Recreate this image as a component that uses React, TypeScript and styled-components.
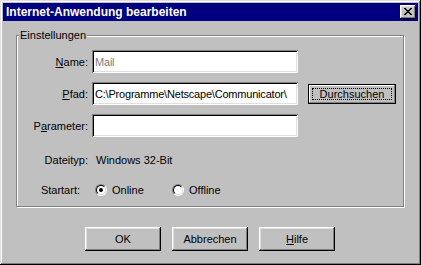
import styled, { createGlobalStyle } from "styled-components";

const GlobalStyle = createGlobalStyle`
  html, body {
    margin: 0;
    padding: 0;
    background: #c0c0c0;
  }
  * {
    box-sizing: border-box;
  }
`;

const bevelOut = `
  box-shadow: inset -1px -1px #000000, inset 1px 1px #ffffff,
    inset -2px -2px #808080, inset 2px 2px #dfdfdf;
`;

const DialogWindow = styled.div`
  width: 421px;
  height: 265px;
  background: #c0c0c0;
  padding: 3px;
  display: flex;
  flex-direction: column;
  font-family: "Liberation Sans", Arial, sans-serif;
  font-size: 11px;
  color: #000000;
  box-shadow: inset -1px -1px #000000, inset 1px 1px #dfdfdf,
    inset -2px -2px #808080, inset 2px 2px #ffffff;
`;

const TitleBar = styled.div`
  height: 18px;
  background: #000080;
  display: flex;
  align-items: center;
  justify-content: space-between;
  padding: 0 2px 0 3px;
`;

const Title = styled.span`
  color: #ffffff;
  font-weight: bold;
  font-size: 12px;
`;

const CloseButton = styled.div`
  width: 16px;
  height: 14px;
  background: #c0c0c0;
  display: flex;
  align-items: center;
  justify-content: center;
  padding-bottom: 1px;
  ${bevelOut}
`;

const Body = styled.div`
  flex: 1;
  display: flex;
  flex-direction: column;
  padding: 14px 12px 0 13px;
`;

const GroupBox = styled.div`
  position: relative;
  width: 388px;
  height: 172px;
  border: 1px solid #808080;
  box-shadow: inset 1px 1px #ffffff, 1px 1px #ffffff;
  padding: 14px 0 0 0;
  display: flex;
  flex-direction: column;
`;

const GroupLabel = styled.span`
  position: absolute;
  top: -8px;
  left: 2px;
  padding: 0 1px;
  background: #c0c0c0;
  line-height: 14px;
`;

const FormRow = styled.div<{ $height: number; $gap: number }>`
  display: grid;
  grid-template-columns: 71px 206px auto;
  column-gap: 4px;
  align-items: center;
  height: ${(p) => p.$height}px;
  margin-bottom: ${(p) => p.$gap}px;
`;

const Label = styled.span<{ $padRight?: number }>`
  text-align: right;
  padding-right: ${(p) => p.$padRight ?? 0}px;
  white-space: nowrap;
`;

const Key = styled.span`
  text-decoration: underline;
  text-underline-offset: 1px;
`;

const TextField = styled.div<{ $muted?: boolean }>`
  height: 23px;
  background: #ffffff;
  padding: 0 3px;
  display: flex;
  align-items: center;
  white-space: nowrap;
  overflow: hidden;
  letter-spacing: -0.2px;
  color: ${(p) => (p.$muted ? "#808080" : "#000000")};
  box-shadow: inset 1px 1px #808080, inset -1px -1px #ffffff,
    inset 2px 2px #000000, inset -2px -2px #dfdfdf;
`;

const Value = styled.span`
  padding-left: 4px;
`;

const FocusButton = styled.div`
  margin-left: 6px;
  width: 88px;
  height: 20px;
  background: #c0c0c0;
  border: 1px solid #000000;
  display: flex;
  align-items: center;
  justify-content: center;
  padding: 3px;
  box-shadow: inset -1px -1px #808080, inset 1px 1px #ffffff;
`;

const FocusRing = styled.span`
  flex: 1;
  height: 100%;
  border: 1px dotted #000000;
  display: flex;
  align-items: center;
  justify-content: center;
  line-height: 12px;
`;

const RadioGroup = styled.div`
  display: flex;
  align-items: center;
  padding-left: 3px;
  gap: 4px;
`;

const RadioOption = styled.label<{ $width: number }>`
  display: flex;
  align-items: center;
  gap: 5px;
  width: ${(p) => p.$width}px;
`;

const RadioCircle = styled.span`
  width: 12px;
  height: 12px;
  border-radius: 50%;
  border: 1px solid;
  border-color: #808080 #ffffff #ffffff #808080;
  display: flex;
`;

const RadioInner = styled.span`
  flex: 1;
  border-radius: 50%;
  border: 1px solid;
  border-color: #000000 #dfdfdf #dfdfdf #000000;
  background: #ffffff;
  display: flex;
  align-items: center;
  justify-content: center;
`;

const RadioDot = styled.span`
  width: 4px;
  height: 4px;
  border-radius: 50%;
  background: #000000;
`;

const ButtonBar = styled.div`
  display: flex;
  justify-content: center;
  gap: 11px;
  margin-top: 20px;
  padding-right: 2px;
`;

const DialogButton = styled.div`
  width: 76px;
  height: 24px;
  background: #c0c0c0;
  display: flex;
  align-items: center;
  justify-content: center;
  ${bevelOut}
`;

const Radio = ({ label, checked, width }: { label: string; checked?: boolean; width: number }) => (
  <RadioOption $width={width}>
    <RadioCircle>
      <RadioInner>{checked && <RadioDot />}</RadioInner>
    </RadioCircle>
    {label}
  </RadioOption>
);

export default function App() {
  return (
    <>
      <GlobalStyle />
      <DialogWindow>
        <TitleBar>
          <Title>Internet-Anwendung bearbeiten</Title>
          <CloseButton>
            <svg width="8" height="7" viewBox="0 0 8 7">
              <path
                d="M0 0h2v1h1v1h2V1h1V0h2v1H7v1H6v1H5v1h1v1h1v1h1v1H6V6H5V5H3v1H2v1H0V6h1V5h1V4h1V3H2V2H1V1H0z"
                fill="#000"
              />
            </svg>
          </CloseButton>
        </TitleBar>
        <Body>
          <GroupBox>
            <GroupLabel>Einstellungen</GroupLabel>
            <FormRow $height={23} $gap={9}>
              <Label>
                <Key>N</Key>ame:
              </Label>
              <TextField $muted>Mail</TextField>
            </FormRow>
            <FormRow $height={23} $gap={9}>
              <Label>
                <Key>P</Key>fad:
              </Label>
              <TextField>C:\Programme\Netscape\Communicator\</TextField>
              <FocusButton>
                <FocusRing>Durchsuchen</FocusRing>
              </FocusButton>
            </FormRow>
            <FormRow $height={23} $gap={13}>
              <Label>
                P<Key>a</Key>rameter:
              </Label>
              <TextField />
            </FormRow>
            <FormRow $height={20} $gap={10}>
              <Label>Dateityp:</Label>
              <Value>Windows 32-Bit</Value>
            </FormRow>
            <FormRow $height={20} $gap={0}>
              <Label $padRight={8}>Startart:</Label>
              <RadioGroup>
                <Radio label="Online" checked width={73} />
                <Radio label="Offline" width={70} />
              </RadioGroup>
            </FormRow>
          </GroupBox>
          <ButtonBar>
            <DialogButton>OK</DialogButton>
            <DialogButton>Abbrechen</DialogButton>
            <DialogButton>
              <span>
                <Key>H</Key>ilfe
              </span>
            </DialogButton>
          </ButtonBar>
        </Body>
      </DialogWindow>
    </>
  );
}
